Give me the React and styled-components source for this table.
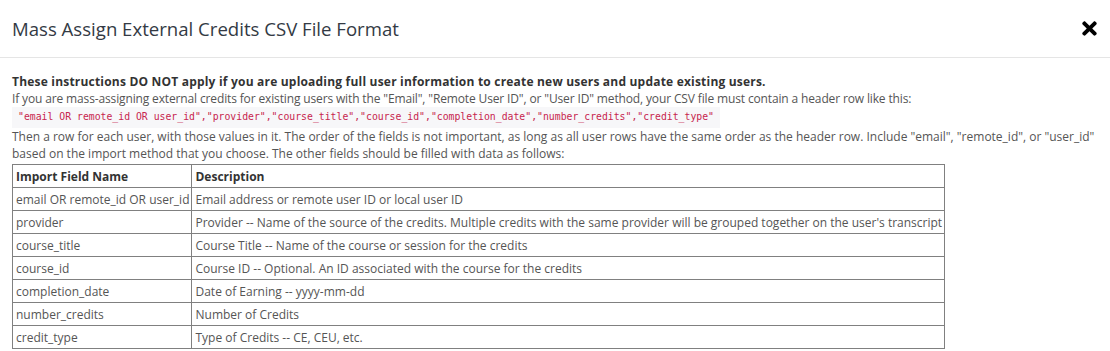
import React from "react";
import styled, { createGlobalStyle } from "styled-components";
import { FaTimes } from "react-icons/fa";

const fields = [
  ["email OR remote_id OR user_id", "Email address or remote user ID or local user ID"],
  ["provider", "Provider -- Name of the source of the credits. Multiple credits with the same provider will be grouped together on the user's transcript"],
  ["course_title", "Course Title -- Name of the course or session for the credits"],
  ["course_id", "Course ID -- Optional. An ID associated with the course for the credits"],
  ["completion_date", "Date of Earning -- yyyy-mm-dd"],
  ["number_credits", "Number of Credits"],
  ["credit_type", "Type of Credits -- CE, CEU, etc."],
];

function App() {
  return (
    <>
      <GlobalStyle />
      <Modal>
        <Header>
          <Title>Mass Assign External Credits CSV File Format</Title>
          <CloseButton aria-label="Close">
            <FaTimes />
          </CloseButton>
        </Header>
        <Body>
          <Strong>
            These instructions DO NOT apply if you are uploading full user information to create new users and update existing users.
          </Strong>
          <Text tight>
            If you are mass-assigning external credits for existing users with the "Email", "Remote User ID", or "User ID" method, your CSV file must contain a header row like this:
          </Text>
          <Code>
            "email OR remote_id OR user_id","provider","course_title","course_id","completion_date","number_credits","credit_type"
          </Code>
          <Text>
            Then a row for each user, with those values in it. The order of the fields is not important, as long as all user rows have the same order as the header row. Include "email", "remote_id", or "user_id" based on the import method that you choose. The other fields should be filled with data as follows:
          </Text>
          <Table>
            <thead>
              <tr>
                <Th>Import Field Name</Th>
                <Th>Description</Th>
              </tr>
            </thead>
            <tbody>
              {fields.map(([name, desc]) => (
                <tr key={name}>
                  <Td>{name}</Td>
                  <Td>{desc}</Td>
                </tr>
              ))}
            </tbody>
          </Table>
        </Body>
      </Modal>
    </>
  );
}

export default App;

const GlobalStyle = createGlobalStyle`
  body {
    margin: 0;
    background: #fff;
    font-family: "Open Sans", sans-serif;
  }
`;

const Modal = styled.div`
  width: 1110px;
  height: 351px;
  overflow: hidden;
  background-color: #fff;
`;

const Header = styled.div`
  display: flex;
  justify-content: space-between;
  align-items: center;
  height: 58px;
  box-sizing: border-box;
  padding: 0 10px 0 12px;
  border-bottom: 1px solid #e5e5e5;
`;

const Title = styled.h4`
  margin: 0;
  font-family: "Open Sans", sans-serif;
  font-size: 18.6px;
  font-weight: 400;
  color: #333a44;
`;

const CloseButton = styled.button`
  background: none;
  border: none;
  padding: 0;
  color: #000;
  font-size: 21px;
  display: flex;
  align-items: center;
  cursor: pointer;
`;

const Body = styled.div`
  padding: 15px 12px 0 12px;
  font-size: 12px;
  line-height: 17px;
  color: #555;
`;

const Strong = styled.div`
  font-weight: 700;
  color: #333;
  letter-spacing: 0.2px;
`;

const Text = styled.div`
  color: #555;
  letter-spacing: ${(props) => (props.tight ? "-0.14px" : "0")};
`;

const Code = styled.code`
  display: block;
  width: fit-content;
  padding: 1px 6px 3px 6px;
  font-family: "DejaVu Sans Mono", monospace;
  font-size: 9.8px;
  line-height: 17px;
  color: #c7254e;
  background-color: #f7f7f9;
`;

const Table = styled.table`
  margin-top: 2px;
  border-collapse: collapse;
  color: #555;
`;

const Th = styled.th`
  text-align: left;
  font-weight: 700;
  color: #333;
  border: 1px solid #808080;
  padding: 3px 2px 2px 3px;
  line-height: 17px;
`;

const Td = styled.td`
  border: 1px solid #808080;
  padding: 3px 2px 2px 3px;
  line-height: 17px;
  white-space: nowrap;
`;
